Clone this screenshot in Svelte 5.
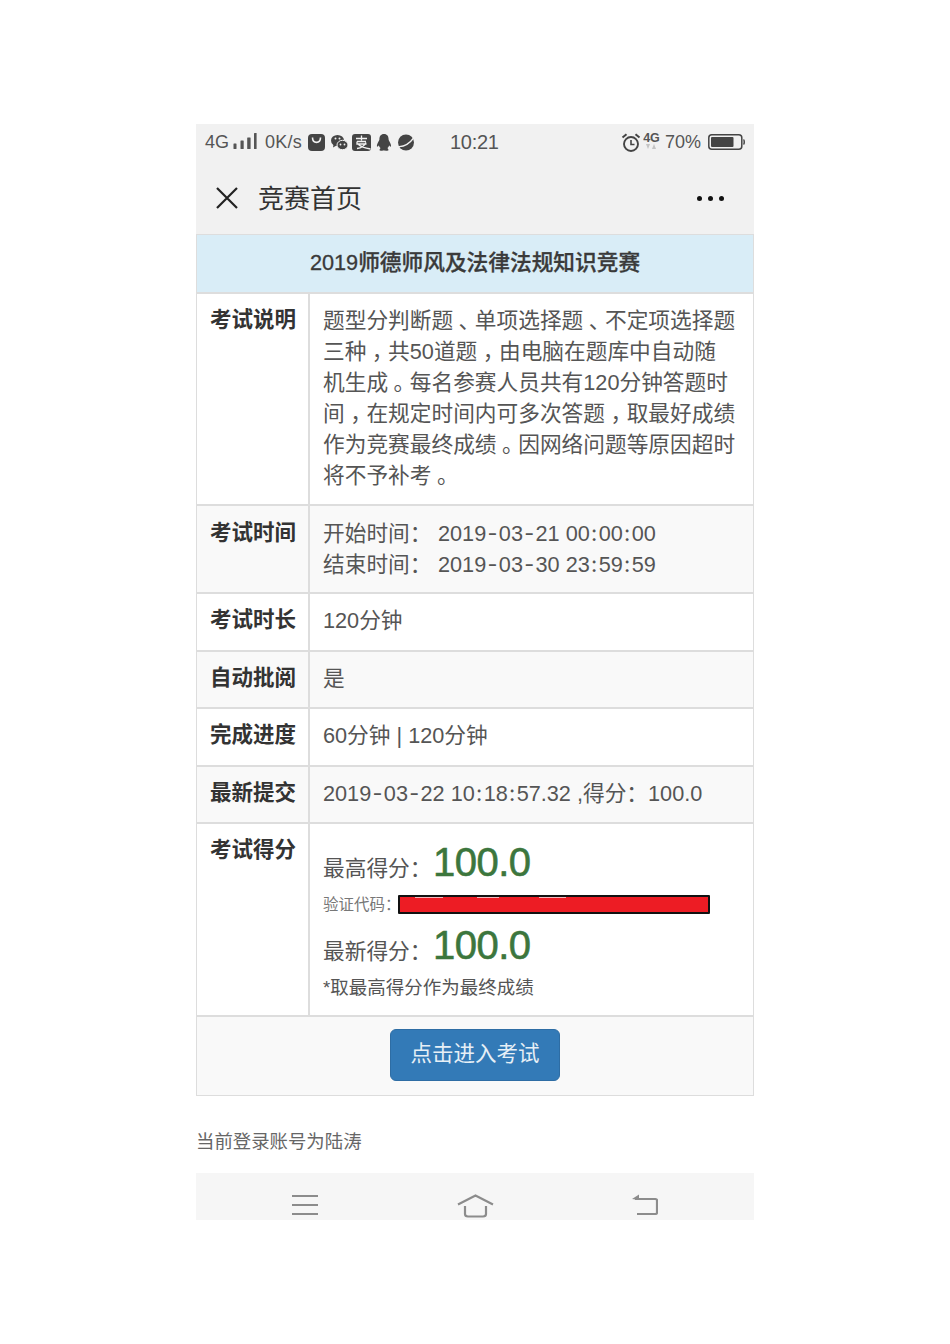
<script>
  const rows = [
    { label: '考试时长', value: '120分钟', alt: false },
    { label: '自动批阅', value: '是', alt: true },
    { label: '完成进度', value: '60分钟 | 120分钟', alt: false },
    { label: '最新提交', value: '2019-03-22 10:18:57.32 ,得分：100.0', alt: true }
  ];
  const intro = [
    '题型分判断题、单项选择题、不定项选择题',
    '三种，共50道题，由电脑在题库中自动随',
    '机生成。每名参赛人员共有120分钟答题时',
    '间，在规定时间内可多次答题，取最好成绩',
    '作为竞赛最终成绩。因网络问题等原因超时',
    '将不予补考。'
  ];

  // Splits text into runs: separators are set wider, CJK punctuation sits toward the middle of its cell.
  function seg(text) {
    const out = [];
    for (const m of text.matchAll(/[-:]|[，。、]|[^-:，。、]+/g)) {
      const t = m[0];
      out.push({ t, c: /^[，。、]$/.test(t) ? 'p' : /^[-:]$/.test(t) ? 's' : '' });
    }
    return out;
  }
</script>

{#snippet rich(text)}{#each seg(text) as s}<span class={s.c}>{s.t}</span>{/each}{/snippet}

<div class="page">
  <div class="phone">
    <div class="status">
      <div class="left">
        <span class="st">4G</span>
        <svg class="sig" width="24" height="17" viewBox="0 0 24 17"><g fill="#555"><rect x="0.500" y="10.500" width="3" height="5.500" rx=".5"/><rect x="7.500" y="7.500" width="3.200" height="8.500" rx=".5"/><rect x="14.200" y="4.500" width="3.400" height="11.500" rx=".5"/><rect x="21" y="0" width="2.600" height="16" rx=".5"/></g></svg>
        <span class="st speed">0K/s</span>
        <svg class="bag" width="17" height="17" viewBox="0 0 17 17"><rect x="0" y="0" width="17" height="17" rx="4" fill="#444"/><path d="M4.500 3.500c0 6.500 8 6.500 8 0" fill="none" stroke="#f1f1f1" stroke-width="1.600"/></svg>
        <svg class="wechat" width="17" height="17" viewBox="0 0 17 17"><ellipse cx="6.500" cy="6.500" rx="6.500" ry="5.500" fill="#444"/><path d="M2.500 10.500l-.5 3 3.500-2z" fill="#444"/><ellipse cx="11.500" cy="11" rx="5.500" ry="4.700" fill="#444" stroke="#f1f1f1" stroke-width="1"/><circle cx="4.500" cy="4.500" r="1" fill="#f1f1f1"/><circle cx="8.500" cy="4.500" r="1" fill="#f1f1f1"/><circle cx="9.500" cy="10.500" r=".9" fill="#f1f1f1"/><circle cx="13.500" cy="10.500" r=".9" fill="#f1f1f1"/></svg>
        <svg class="alipay" width="19" height="17" viewBox="0 0 19 17"><rect x="0" y="0" width="19" height="17" rx="3" fill="#444"/><path d="M4 4.500h11M9.500 1.500v5M5 7.500h9M5 7.500v2.500h9.500M14 8.500c-1.500 3.500-5 5.500-9 6M6.500 10.500c2 2 6 3.500 12 4.500" fill="none" stroke="#f1f1f1" stroke-width="1.300"/></svg>
        <svg class="bell" width="16" height="17" viewBox="0 0 16 17"><path d="M8 0c3.300 0 4.600 2.400 4.600 5.300 0 1.600 2.900 4.700 2.400 7.400-.9 0-1.500-.6-1.900-1.400-.3 1.300-.9 2.100-1.600 2.800l1.100 1.900c0 .9-3.600.9-4.600.2-1 .7-4.600.7-4.600-.2l1.100-1.900c-.7-.7-1.300-1.500-1.600-2.800-.4.8-1 1.400-1.900 1.400-.5-2.700 2.400-5.800 2.400-7.400C3.400 2.400 4.700 0 8 0z" fill="#444"/></svg>
        <svg class="planet" width="18" height="17" viewBox="0 0 18 17"><circle cx="9" cy="8.500" r="8" fill="#444"/><path d="M0.500 12.500c6 .8 12.500-3.500 17-9.500" fill="none" stroke="#f1f1f1" stroke-width="1.300"/></svg>
      </div>
      <span class="time">10:21</span>
      <div class="right">
        <svg width="20" height="21" viewBox="0 0 20 21"><circle cx="10" cy="12" r="7" fill="none" stroke="#444" stroke-width="1.900"/><path d="M10 8v4.500h3.500" fill="none" stroke="#444" stroke-width="1.600"/><path d="M1.500 5.500L5.500 2.200M18.500 5.500L14.500 2.200" stroke="#444" stroke-width="2"/></svg>
        <div class="net"><span class="g4">4G</span><svg width="12" height="6" viewBox="0 0 12 6"><path d="M1 0h4L3 5zM7 5h4L9 0z" fill="#c4c4c4"/></svg></div>
        <span class="st pct">70%</span>
        <svg class="bat" width="37" height="16" viewBox="0 0 37 16"><rect x="0.800" y="0.800" width="33" height="14.400" rx="3" fill="none" stroke="#444" stroke-width="1.500"/><rect x="3" y="3" width="22.500" height="10" rx="1" fill="#444"/><path d="M35.500 5.500c1 .7 1 4.300 0 5" fill="none" stroke="#444" stroke-width="1.500"/></svg>
      </div>
    </div>

    <div class="nav">
      <svg class="close" width="22" height="22" viewBox="0 0 22 22"><path d="M1 1l20 20M21 1L1 21" stroke="#222" stroke-width="2.200"/></svg>
      <span class="title">竞赛首页</span>
      <div class="dots"><i></i><i></i><i></i></div>
    </div>

    <div class="table">
      <div class="head">2019师德师风及法律法规知识竞赛</div>

      <div class="row r-desc">
        <div class="lab">考试说明</div>
        <div class="val">
          {#each intro as line}
            <div class="tline">{@render rich(line)}</div>
          {/each}
        </div>
      </div>

      <div class="row alt r-time">
        <div class="lab">考试时间</div>
        <div class="val">
          <div class="tline"><span class="tk">开始时间：</span>{@render rich('2019-03-21 00:00:00')}</div>
          <div class="tline"><span class="tk">结束时间：</span>{@render rich('2019-03-30 23:59:59')}</div>
        </div>
      </div>

      {#each rows as r}
        <div class="row r-one" class:alt={r.alt}>
          <div class="lab">{r.label}</div>
          <div class="val">{@render rich(r.value)}</div>
        </div>
      {/each}

      <div class="row r-score">
        <div class="lab">考试得分</div>
        <div class="val score">
          <div class="sline"><span class="sk">最高得分：</span><span class="big">100.0</span></div>
          <div class="code"><span class="ck">验证代码：</span><span class="redact"></span></div>
          <div class="sline"><span class="sk">最新得分：</span><span class="big">100.0</span></div>
          <div class="note">*取最高得分作为最终成绩</div>
        </div>
      </div>

      <div class="action"><button>点击进入考试</button></div>
    </div>

    <div class="account">当前登录账号为陆涛</div>

    <div class="bottom">
      <svg width="26" height="22" viewBox="0 0 26 22"><path d="M0 2h26M0 11h26M0 20h26" stroke="#8c8c8c" stroke-width="2.200"/></svg>
      <svg width="37" height="24" viewBox="0 0 37 24"><path d="M1 10.500L18.500 1.500l17.500 9M8 12v8q0 2.500 3 2.500h15q3 0 3-2.500v-8" fill="none" stroke="#8c8c8c" stroke-width="2.200"/></svg>
      <svg width="26" height="22" viewBox="0 0 26 22"><path d="M3 5h20.500q1.500 0 1.500 1.500v12q0 1.500-1.500 1.500H5" fill="none" stroke="#8c8c8c" stroke-width="2.200"/><path d="M0 5l7-4.500V6z" fill="#8c8c8c"/></svg>
    </div>
  </div>
</div>

<style>
  :global(body) {
    margin: 0;
    background: #fff;
  }
  .page {
    height: 1344px;
    padding-top: 124px;
    box-sizing: border-box;
    font-family: "Liberation Sans", "Noto Sans CJK SC", sans-serif;
    color: #555;
  }
  .phone {
    width: 558px;
    margin: 0 auto;
  }
  .s { font-family: Inter, sans-serif; margin-left: 1.300px; letter-spacing: 1.300px; line-height: 0; }
  .p { margin-left: 0.25em; letter-spacing: -0.25em; }
  .status {
    height: 46px;
    background: #f1f1f1;
    display: flex;
    align-items: center;
    padding: 0 9px 10px;
    box-sizing: border-box;
    position: relative;
    color: #555;
  }
  .left, .right {
    display: flex;
    align-items: center;
  }
  .st { font-size: 18px; }
  .sig { margin-left: 4px; margin-top: -1px; }
  .speed { margin-left: 8px; letter-spacing: 0.2px; }
  .bag { margin-left: 6px; }
  .wechat { margin-left: 6px; }
  .alipay { margin-left: 4px; }
  .bell { margin-left: 5px; }
  .planet { margin-left: 5px; }
  .time {
    position: absolute;
    left: 254px;
    top: 5px;
    font-size: 20px;
    line-height: 26px;
    letter-spacing: -0.3px;
  }
  .right {
    margin-left: auto;
  }
  .net {
    display: flex;
    flex-direction: column;
    align-items: center;
    line-height: 1;
    margin: -2px 0 0 3px;
    width: 15px;
  }
  .g4 { font-size: 12.500px; font-weight: 700; line-height: 12px; }
  .pct { margin-left: 6px; }
  .bat { margin-left: 7px; }
  .nav {
    height: 64px;
    background: #f1f1f1;
    display: flex;
    align-items: center;
    padding: 0 30px 8px 20px;
    box-sizing: border-box;
  }
  .close { flex: none; }
  .title {
    margin: -3px 0 0 20px;
    font-size: 26px;
    color: #333;
  }
  .dots {
    margin-left: auto;
    display: flex;
    gap: 6px;
  }
  .dots i {
    width: 5px;
    height: 5px;
    border-radius: 50%;
    background: #111;
  }
  .table {
    border: 1px solid #ddd;
    background: #fff;
    font-size: 21.700px;
    line-height: 31px;
  }
  .head {
    height: 57px;
    box-sizing: border-box;
    padding-bottom: 2px;
    background: #d9edf7;
    color: #3a3a3a;
    font-weight: 500;
    -webkit-text-stroke: 0.3px #3a3a3a;
    display: flex;
    align-items: center;
    justify-content: center;
  }
  .row {
    display: grid;
    grid-template-columns: 113px 1fr;
    border-top: 2px solid #ddd;
    box-sizing: border-box;
  }
  .alt { background: #f9f9f9; }
  .lab {
    padding: 11px 0 0 13px;
    font-weight: 700;
    color: #333;
    font-size: 21.500px;
    border-right: 2px solid #ddd;
  }
  .val {
    padding: 11px 16px 0 13px;
  }
  .r-desc { height: 212px; }
  .r-time { height: 88px; }
  .r-time .lab { padding-top: 12px; }
  .r-time .val { padding-top: 12px; }
  .r-time .tline { height: 30.500px; }
  .r-one { height: 57.500px; }
  .tline { white-space: nowrap; }
  .tk { display: inline-block; width: 115px; }
  .r-score { height: 193px; }
  .score { padding-top: 11px; }
  .sline {
    display: flex;
    align-items: baseline;
    height: 42px;
    line-height: 54px;
  }
  .sk { width: 110px; }
  .big {
    font-size: 40px;
    letter-spacing: -0.5px;
    color: #3c763d;
    -webkit-text-stroke: 0.6px #3c763d;
  }
  .code {
    display: flex;
    align-items: center;
    height: 27px;
    margin-top: 14px;
    font-size: 15.500px;
    color: #777;
  }
  .ck { width: 75px; white-space: nowrap; }
  .redact {
    width: 312px;
    height: 19px;
    box-sizing: border-box;
    background: linear-gradient(90deg, transparent 5%, #f6b8bb 5%, #f6b8bb 14%, transparent 14%, transparent 25%, #f6b8bb 25%, #f6b8bb 32%, transparent 32%, transparent 45%, #f6b8bb 45%, #f6b8bb 54%, transparent 54%) top / 100% 1px no-repeat, #ed1c24;
    border: 2px solid #111;
    border-radius: 1px;
  }
  .note {
    font-size: 18.500px;
    margin-top: 12px;
  }
  .action {
    height: 80px;
    box-sizing: border-box;
    border-top: 2px solid #ddd;
    background: #f9f9f9;
    padding-bottom: 3px;
    display: flex;
    align-items: center;
    justify-content: center;
  }
  button {
    width: 170px;
    height: 52px;
    background: #337ab7;
    color: #e6eff6;
    border: 1px solid #2e6da4;
    border-radius: 6px;
    font: inherit;
    font-size: 21.500px;
    padding: 0;
  }
  .account {
    margin-top: 33px;
    font-size: 18.400px;
    line-height: 26px;
    color: #666;
  }
  .bottom {
    margin-top: 18px;
    height: 47px;
    background: #f6f6f6;
    overflow: hidden;
    display: flex;
    justify-content: space-between;
    padding: 21px 96px 0 96px;
    box-sizing: border-box;
    align-items: flex-start;
  }
</style>
